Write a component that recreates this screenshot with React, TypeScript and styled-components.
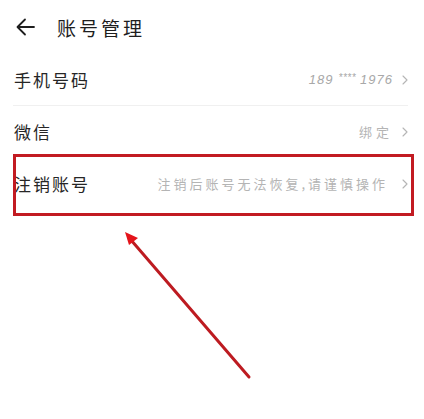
import React from 'react';
import styled, {createGlobalStyle} from 'styled-components';

const GlobalStyle = createGlobalStyle`
    html, body {
        margin: 0;
        padding: 0;
        background: #ffffff;
    }
    body {
        font-family: "Noto Sans CJK SC", "Noto Sans", sans-serif;
        color: #222;
    }
`

const rows = [
    {label: '手机号码', value: 'phone', divider: true},
    {label: '微信', value: '绑定', divider: false},
    {label: '注销账号', value: '注销后账号无法恢复,请谨慎操作', divider: false, wide: true},
];

function Chevron() {
    return (
        <ChevronIcon viewBox="0 0 6 10" width={6} height={10}>
            <path d="M1 1 L5 5 L1 9" fill="none" stroke="#b5b5b5" strokeWidth="1.1" strokeLinecap="round" strokeLinejoin="round"/>
        </ChevronIcon>
    );
}

function App() {
    return (
        <Page>
            <GlobalStyle/>
            <Header>
                <svg width="19" height="18" viewBox="0 0 19 18">
                    <path d="M18 9 H2 M9 1.5 L1.5 9 L9 16.5" fill="none" stroke="#1e1e1e" strokeWidth="1.8" strokeLinecap="round" strokeLinejoin="round"/>
                </svg>
                <Title>账号管理</Title>
            </Header>
            <List>
                {rows.map((row) => (
                    <Row key={row.label} $divider={row.divider}>
                        <Label>{row.label}</Label>
                        <Right>
                            {row.value === 'phone' ? (
                                <Phone>189<Stars>****</Stars>1976</Phone>
                            ) : (
                                <Value $wide={row.wide}>{row.value}</Value>
                            )}
                            <Chevron/>
                        </Right>
                    </Row>
                ))}
            </List>
            <Highlight/>
            <Pointer width="424" height="419" viewBox="0 0 424 419">
                <line x1="249" y1="377" x2="131" y2="240" stroke="#bd1b21" strokeWidth="3" strokeLinecap="round"/>
                <polygon points="125,232 138,238 129,245" fill="#e4141b"/>
            </Pointer>
        </Page>
    );
}

const Page = styled.div`
    position: relative;
    width: 424px;
    height: 419px;
    overflow: hidden;
    background: #fff;
`
const Header = styled.div`
    height: 54px;
    display: flex;
    align-items: center;
    padding-left: 16px;
    box-sizing: border-box;
`
const Title = styled.div`
    margin-left: 22px;
    font-size: 19px;
    letter-spacing: 3px;
    color: #1e1e1e;
`
const List = styled.div`
    display: flex;
    flex-direction: column;
    padding: 0 16px 0 13px;
`
const Row = styled.div<{ $divider?: boolean }>`
    height: 52px;
    display: flex;
    align-items: center;
    justify-content: space-between;
    border-bottom: 1px solid ${({$divider}) => ($divider ? '#f0f0f0' : 'transparent')};
    box-sizing: border-box;
`
const Label = styled.div`
    padding-left: 1px;
    font-size: 17px;
    letter-spacing: 2px;
    color: #262626;
`
const Right = styled.div`
    display: flex;
    align-items: center;
    gap: 9px;
`
const Value = styled.div<{ $wide?: boolean }>`
    font-size: 13px;
    letter-spacing: ${({$wide}) => ($wide ? '3px' : '4px')};
    color: #b4b4b4;
    margin-right: ${({$wide}) => ($wide ? '5px' : '0')};
`
const Phone = styled.div`
    font-family: "Liberation Sans", sans-serif;
    font-style: italic;
    font-size: 13px;
    letter-spacing: 1px;
    color: #a8a8a8;
`
const Stars = styled.span`
    font-size: 10px;
    vertical-align: 3px;
    letter-spacing: 0.5px;
    margin: 0 4px 0 5px;
`
const ChevronIcon = styled.svg`
    display: block;
`
const Highlight = styled.div`
    position: absolute;
    left: 13px;
    top: 154px;
    width: 401px;
    height: 62px;
    border: 3.5px solid #c21b22;
    box-sizing: border-box;
    pointer-events: none;
`
const Pointer = styled.svg`
    position: absolute;
    left: 0;
    top: 0;
    pointer-events: none;
`

export default App;
